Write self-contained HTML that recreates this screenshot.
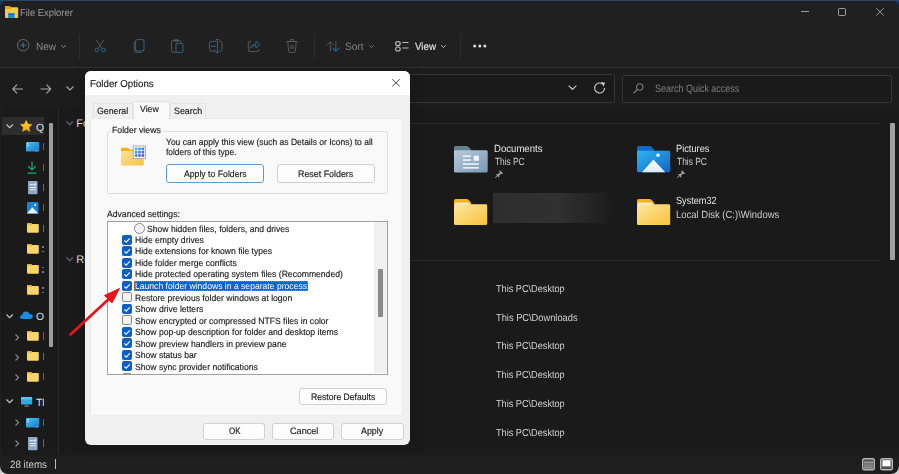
<!DOCTYPE html>
<html><head><meta charset="utf-8">
<style>
*{box-sizing:border-box}
html,body{margin:0;padding:0}
body{width:899px;height:474px;overflow:hidden;position:relative;background:linear-gradient(180deg,#2b4563 0,#2b4563 1px,#173a6c 1px,#173a6c 50%,#cfcfcf 50%);font-family:"Liberation Sans",sans-serif}
.a{position:absolute}
.t{position:absolute;white-space:pre;line-height:1}
svg{position:absolute;overflow:visible}
#win{position:absolute;left:0;top:1px;width:898.5px;height:473px;background:#1e1e1e;border-radius:7px 7px 8px 8px;overflow:hidden}
.tb{color:#8a8a8a;font-size:9.75px;top:41.75px}
.ct{color:#e4e4e4;font-size:9.35px}
.dt{font-size:8.5px;color:#1b1b1b}
.btn{position:absolute;background:#fdfdfd;border:1px solid #d0d0d0;border-radius:3px}
.cb{position:absolute;left:122px;width:10px;height:10px;border-radius:2px;background:#0b5fc4}
.cbo{position:absolute;left:122px;width:10px;height:10px;border-radius:2px;background:#f3f3f3;border:1px solid #8a8a8a}
.li{position:absolute;left:135.6px;font-size:8.5px;color:#1b1b1b;white-space:pre;line-height:1}
</style></head><body>
<div id="win"></div>
<!-- top chrome -->
<div class="a" style="left:0;top:1px;width:899px;height:66px;background:#202020;border-radius:7px 7px 0 0"></div>
<div class="a" style="left:0;top:67px;width:899px;height:1px;background:#2f2f2f"></div>
<div class="a" style="left:0;top:68px;width:899px;height:41px;background:#1c1c1c"></div>
<div class="a" style="left:1.5px;top:109px;width:897px;height:345.6px;background:#1a1a1a"></div>
<!-- app icon -->
<svg style="left:5px;top:6px" width="13.2" height="12" viewBox="0 0 13.2 12"><path d="M0 1Q0 0 1 0H4.6L5.9 1.3H12.2Q13.2 1.3 13.2 2.3V11Q13.2 12 12.2 12H1Q0 12 0 11Z" fill="#f6c84a"/><path d="M0 1Q0 0 1 0H4.6L5.9 1.3V2.9H0Z" fill="#e4a514"/><rect x="3.1" y="6.9" width="6.6" height="5.1" rx="0.5" fill="#1d8ae0"/><rect x="4" y="8" width="4.8" height="0.8" fill="#0f5fae"/></svg>
<div class="t" style="left:19.95px;top:9.00px;font-size:10.1px;color:#9c9c9c;transform:scaleX(0.9327);transform-origin:0 0;text-rendering:geometricPrecision;">File Explorer</div>
<!-- caption buttons -->
<div class="a" style="left:801px;top:11.4px;width:8px;height:1px;background:#9a9a9a"></div>
<div class="a" style="left:838px;top:8.2px;width:8px;height:8px;border:1px solid #9a9a9a;border-radius:1.2px"></div>
<svg style="left:875.8px;top:8.3px" width="8" height="7.7" viewBox="0 0 8 7.7"><path d="M0.2 0.2L7.8 7.5M7.8 0.2L0.2 7.5" stroke="#9a9a9a" stroke-width="0.95"/></svg>
<!-- toolbar -->
<svg style="left:16.9px;top:39.4px" width="12.4" height="12.4" viewBox="0 0 12.4 12.4">
  <circle cx="6.2" cy="6.2" r="5.7" fill="none" stroke="#6a6a6a" stroke-width="1"/>
  <path d="M6.2 3.2V9.2M3.2 6.2H9.2" stroke="#3a7898" stroke-width="1"/>
</svg>
<div class="t" style="left:35.90px;top:42.00px;font-size:10.6px;color:#8a8a8a;transform:scaleX(0.9483);transform-origin:0 0;text-rendering:geometricPrecision;">New</div>
<svg style="left:61px;top:44.7px" width="5" height="3" viewBox="0 0 5 3"><path d="M0.3 0.3L2.5 2.5L4.7 0.3" fill="none" stroke="#8a8a8a" stroke-width="1"/></svg>
<div class="a" style="left:79px;top:33.5px;width:1px;height:25px;background:#2e2e2e"></div>
<!-- cut -->
<svg style="left:94px;top:39px" width="12" height="14" viewBox="0 0 12 14">
  <path d="M2.3 1L8 9.5M9.7 1L4 9.5" stroke="#555" stroke-width="1"/>
  <circle cx="3" cy="11" r="1.9" fill="none" stroke="#2b6180" stroke-width="1"/>
  <circle cx="9.5" cy="11" r="1.9" fill="none" stroke="#2b6180" stroke-width="1"/>
</svg>
<!-- copy -->
<svg style="left:133px;top:39px" width="12" height="14" viewBox="0 0 12 14">
  <path d="M1.2 3V11.5Q1.2 13.3 3 13.3H8.5" fill="none" stroke="#555" stroke-width="1"/>
  <rect x="2.5" y="0.5" width="8.5" height="11.5" rx="2" fill="none" stroke="#2b6180" stroke-width="1.1"/>
</svg>
<!-- paste -->
<svg style="left:171px;top:39px" width="13" height="14" viewBox="0 0 13 14">
  <path d="M5 13.3H2Q0.5 13.3 0.5 11.8V3Q0.5 1.5 2 1.5H8.5Q10 1.5 10 3V4" fill="none" stroke="#555" stroke-width="1"/>
  <rect x="3.3" y="0.6" width="4" height="1.8" rx="0.8" fill="none" stroke="#555" stroke-width="1"/>
  <rect x="5" y="4.3" width="7" height="9.2" rx="1.8" fill="none" stroke="#2b6180" stroke-width="1.1"/>
</svg>
<!-- rename -->
<svg style="left:209px;top:39px" width="14" height="14" viewBox="0 0 14 14">
  <path d="M7 2.3H2.2Q0.5 2.3 0.5 4V10.3Q0.5 12 2.2 12H7M10 2.3H11.3Q13 2.3 13 4V10.3Q13 12 11.3 12H10" fill="none" stroke="#5a5a5a" stroke-width="1"/>
  <path d="M8.4 0.5V13.5M6.8 0.5H10M6.8 13.5H10" stroke="#2b6180" stroke-width="1.1"/>
  <path d="M2.2 7.2H6.8" stroke="#2b6180" stroke-width="1.3"/>
</svg>
<!-- share -->
<svg style="left:248px;top:39px" width="13" height="14" viewBox="0 0 13 14">
  <path d="M3 2.3H2Q0.3 2.3 0.3 4V10.8Q0.3 12.6 2 12.6H9Q10.8 12.6 10.8 10.8V10" fill="none" stroke="#5a5a5a" stroke-width="1"/>
  <path d="M2.3 9.5Q3 5 8 5.2V2L12 5.5L8 9V6.5Q4.5 6.3 2.3 9.5Z" fill="none" stroke="#2b6180" stroke-width="1"/>
</svg>
<!-- delete -->
<svg style="left:286px;top:39px" width="12" height="14" viewBox="0 0 12 14">
  <path d="M0.5 2.5H11.5M4.3 2.5V1.2Q4.3 0.6 5 0.6H7Q7.7 0.6 7.7 1.2V2.5M1.8 2.5L2.6 12Q2.8 13.4 4 13.4H8Q9.2 13.4 9.4 12L10.2 2.5" fill="none" stroke="#5a5a5a" stroke-width="1"/>
  <path d="M5 5.8V10M7 5.8V10" stroke="#5a5a5a" stroke-width="1"/>
</svg>
<div class="a" style="left:313.5px;top:33.5px;width:1px;height:25px;background:#2e2e2e"></div>
<!-- sort -->
<svg style="left:326px;top:40.5px" width="14" height="11" viewBox="0 0 14 11">
  <path d="M4.3 10.5V0.8M0.8 4.3L4.3 0.8L7.8 4.3" fill="none" stroke="#5a5a5a" stroke-width="1"/>
  <path d="M9.8 0.5V10.2M6.3 6.7L9.8 10.2L13.3 6.7" fill="none" stroke="#2b6180" stroke-width="1.1"/>
</svg>
<div class="t" style="left:345.09px;top:42.00px;font-size:10.6px;color:#808080;transform:scaleX(0.9540);transform-origin:0 0;text-rendering:geometricPrecision;">Sort</div>
<svg style="left:368.5px;top:44.7px" width="5" height="3" viewBox="0 0 5 3"><path d="M0.3 0.3L2.5 2.5L4.7 0.3" fill="none" stroke="#777" stroke-width="1"/></svg>
<!-- view -->
<svg style="left:395px;top:41px" width="14" height="11" viewBox="0 0 14 11">
  <rect x="0.6" y="0.6" width="4.6" height="4" rx="2" fill="none" stroke="#bdbdbd" stroke-width="1.1"/>
  <rect x="0.6" y="6" width="4.6" height="4" rx="2" fill="none" stroke="#bdbdbd" stroke-width="1.1"/>
  <path d="M7.3 1.5H13.5M7.3 7H13.5" stroke="#bdbdbd" stroke-width="1.1"/>
</svg>
<div class="t" style="left:414.60px;top:42.00px;font-size:10.6px;color:#dcdcdc;transform:scaleX(0.9258);transform-origin:0 0;text-rendering:geometricPrecision;-webkit-text-stroke:0.2px #dcdcdc;">View</div>
<svg style="left:440.7px;top:45px" width="5" height="3" viewBox="0 0 5 3"><path d="M0.3 0.3L2.5 2.5L4.7 0.3" fill="none" stroke="#bbb" stroke-width="1"/></svg>
<div class="a" style="left:459.5px;top:33.5px;width:1px;height:25px;background:#2e2e2e"></div>
<svg style="left:473px;top:44px" width="14" height="4" viewBox="0 0 14 4"><circle cx="1.7" cy="2" r="1.5" fill="#dedede"/><circle cx="6.8" cy="2" r="1.5" fill="#dedede"/><circle cx="11.9" cy="2" r="1.5" fill="#dedede"/></svg>
<!-- address row -->
<svg style="left:11.5px;top:83.5px" width="11.5" height="10" viewBox="0 0 11.5 10"><path d="M11 5H0.8M5 0.7L0.8 5L5 9.3" fill="none" stroke="#a8a8a8" stroke-width="1.1"/></svg>
<svg style="left:40px;top:83.5px" width="11.5" height="10" viewBox="0 0 11.5 10"><path d="M0.5 5H10.7M6.5 0.7L10.7 5L6.5 9.3" fill="none" stroke="#a8a8a8" stroke-width="1.1"/></svg>
<svg style="left:66px;top:85.5px" width="8" height="5" viewBox="0 0 8 5"><path d="M0.5 0.5L4 4L7.5 0.5" fill="none" stroke="#a8a8a8" stroke-width="1.1"/></svg>
<div class="a" style="left:88px;top:74px;width:527px;height:28.5px;border:1px solid #353535;background:#1a1a1a;border-radius:2px"></div>
<svg style="left:568px;top:84.9px" width="9" height="5" viewBox="0 0 9 5"><path d="M0.6 0.6L4.5 4.3L8.4 0.6" fill="none" stroke="#bcbcbc" stroke-width="1.2"/></svg>
<svg style="left:594px;top:82px" width="12" height="12" viewBox="0 0 12 12"><path d="M10.6 6A5 5 0 1 1 8.3 1.8" fill="none" stroke="#c8c8c8" stroke-width="1.2"/><path d="M6.8 0.2L11 0.6L9.6 4.6Z" fill="#d0d0d0"/></svg>
<div class="a" style="left:622px;top:74.5px;width:270px;height:28px;border:1px solid #353535;background:#1a1a1a;border-radius:2px"></div>
<svg style="left:633px;top:82.5px" width="11" height="11" viewBox="0 0 11 11"><circle cx="6.8" cy="4" r="3.3" fill="none" stroke="#8a8a8a" stroke-width="1"/><path d="M4.4 6.4L0.6 10.2" stroke="#8a8a8a" stroke-width="1.1"/></svg>
<div class="t" style="left:654.55px;top:84.00px;font-size:10.6px;color:#7d7d7d;transform:scaleX(0.8471);transform-origin:0 0;text-rendering:geometricPrecision;">Search Quick access</div>

<!-- NAV PANE -->
<div class="a" style="left:58px;top:109px;width:1px;height:346px;background:#2a2a2a"></div>
<div class="a" style="left:2px;top:117.4px;width:41.7px;height:17.6px;background:#2d2d2d"></div>
<svg style="left:6.3px;top:123.8px" width="8" height="5" viewBox="0 0 8 5"><path d="M0.5 0.5L3.7 3.7L6.9 0.5" fill="none" stroke="#c8c8c8" stroke-width="1.1"/></svg>
<svg style="left:20.2px;top:120.3px" width="12.4" height="12" viewBox="0 0 12.4 12"><defs><linearGradient id="sg" x1="0" y1="0" x2="0" y2="1"><stop offset="0" stop-color="#ffd83a"/><stop offset="1" stop-color="#f3a80c"/></linearGradient></defs><path d="M6.2 0.3L8 4L12.1 4.5L9.1 7.4L9.9 11.6L6.2 9.6L2.5 11.6L3.3 7.4L0.3 4.5L4.4 4Z" fill="url(#sg)" stroke="#f0b010" stroke-width="0.4" stroke-linejoin="round"/></svg>
<div class="a" style="left:0;top:0;width:43.8px;height:455px;overflow:hidden">
  <div class="t" style="left:35.90px;top:124.00px;font-size:10.4px;color:#e0e0e0;text-rendering:geometricPrecision;">Quick access</div>
  <div class="t" style="left:35.90px;top:313.00px;font-size:10.4px;color:#e0e0e0;text-rendering:geometricPrecision;">OneDrive</div>
  <div class="t" style="left:35.90px;top:399.00px;font-size:10.4px;color:#e0e0e0;text-rendering:geometricPrecision;">This PC</div>
</div>
<div class="a" style="left:42.5px;top:143.0px;width:1.5px;height:7.2px;background:#3f6e9c"></div>
<div class="a" style="left:42.5px;top:163.7px;width:1.5px;height:7.2px;background:#3f6e9c"></div>
<div class="a" style="left:42.5px;top:183.8px;width:1.5px;height:7.2px;background:#3f6e9c"></div>
<div class="a" style="left:42.5px;top:203.9px;width:1.5px;height:7.2px;background:#3f6e9c"></div>
<div class="a" style="left:42.5px;top:224.7px;width:1.5px;height:7.2px;background:#3f6e9c"></div>
<div class="a" style="left:42.5px;top:332.4px;width:1.5px;height:7.2px;background:#3f6e9c"></div>
<div class="a" style="left:42.5px;top:352.6px;width:1.5px;height:7.2px;background:#3f6e9c"></div>
<div class="a" style="left:42.5px;top:372.6px;width:1.5px;height:7.2px;background:#3f6e9c"></div>
<div class="a" style="left:42.5px;top:418.9px;width:1.5px;height:7.2px;background:#3f6e9c"></div>
<div class="a" style="left:42.5px;top:439.4px;width:1.5px;height:7.2px;background:#3f6e9c"></div>
<div class="a" style="left:42.3px;top:246.0px;width:1.6px;height:1.6px;background:#4f7fae"></div>
<div class="a" style="left:42.3px;top:250.6px;width:1.6px;height:1.6px;background:#4f7fae"></div>
<div class="a" style="left:42.3px;top:266.5px;width:1.6px;height:1.6px;background:#4f7fae"></div>
<div class="a" style="left:42.3px;top:271.1px;width:1.6px;height:1.6px;background:#4f7fae"></div>
<div class="a" style="left:42.3px;top:287.0px;width:1.6px;height:1.6px;background:#4f7fae"></div>
<div class="a" style="left:42.3px;top:291.6px;width:1.6px;height:1.6px;background:#4f7fae"></div>
<!-- nav icons -->
<svg style="left:25.6px;top:141.6px" width="13.3" height="9.8" viewBox="0 0 13.3 9.8"><defs><linearGradient id="dk1" x1="0" y1="0" x2="1" y2="1"><stop offset="0" stop-color="#45c6f2"/><stop offset="1" stop-color="#1478cc"/></linearGradient></defs><rect x="0" y="0" width="13.3" height="9.4" rx="1" fill="url(#dk1)"/><rect x="1.2" y="1.2" width="1.3" height="1.1" fill="#e8f6fd"/><rect x="1.2" y="3.2" width="1.3" height="1.1" fill="#e8f6fd"/><rect x="9.3" y="8.5" width="2.5" height="0.9" fill="#9ab"/></svg>
<svg style="left:27.4px;top:160.6px" width="10" height="13" viewBox="0 0 10 13"><path d="M5 0.5V9M1.2 5.3L5 9L8.8 5.3M0.5 12.2H9.5" fill="none" stroke="#1fa672" stroke-width="1.2"/></svg>
<svg style="left:28px;top:180.7px" width="9.5" height="13.3" viewBox="0 0 9.5 13.3"><rect width="9.5" height="13.3" rx="1" fill="#8da9c6"/><rect x="1.8" y="3" width="3.5" height="1" fill="#e8eef5"/><rect x="6" y="2.5" width="2" height="2" fill="#e8eef5"/><rect x="1.8" y="6" width="6" height="0.9" fill="#e8eef5"/><rect x="1.8" y="8.2" width="6" height="0.9" fill="#e8eef5"/></svg>
<svg style="left:27px;top:201.8px" width="11.4" height="11.4" viewBox="0 0 11.4 11.4"><rect width="11.4" height="11.4" rx="1" fill="#1683d8"/><path d="M0 11.4L5.2 5.2L11.4 11.4Z" fill="#e8f2fb"/><circle cx="8.2" cy="3" r="1" fill="#fff"/></svg>
<svg style="left:26.8px;top:223px" width="11.8" height="9.7" viewBox="0 0 11.8 9.7"><path d="M0 1Q0 0 1 0H4L5 1H10.8Q11.8 1 11.8 2V8.7Q11.8 9.7 10.8 9.7H1Q0 9.7 0 8.7Z" fill="#f8d469"/><path d="M0 1Q0 0 1 0H4L5 1V1.8H0Z" fill="#e9b12c"/></svg>
<svg style="left:26.8px;top:243.7px" width="11.8" height="9.7" viewBox="0 0 11.8 9.7"><path d="M0 1Q0 0 1 0H4L5 1H10.8Q11.8 1 11.8 2V8.7Q11.8 9.7 10.8 9.7H1Q0 9.7 0 8.7Z" fill="#f8d469"/><path d="M0 1Q0 0 1 0H4L5 1V1.8H0Z" fill="#e9b12c"/></svg>
<svg style="left:26.8px;top:264.2px" width="11.8" height="9.7" viewBox="0 0 11.8 9.7"><path d="M0 1Q0 0 1 0H4L5 1H10.8Q11.8 1 11.8 2V8.7Q11.8 9.7 10.8 9.7H1Q0 9.7 0 8.7Z" fill="#f8d469"/><path d="M0 1Q0 0 1 0H4L5 1V1.8H0Z" fill="#e9b12c"/></svg>
<svg style="left:26.8px;top:284.8px" width="11.8" height="9.7" viewBox="0 0 11.8 9.7"><path d="M0 1Q0 0 1 0H4L5 1H10.8Q11.8 1 11.8 2V8.7Q11.8 9.7 10.8 9.7H1Q0 9.7 0 8.7Z" fill="#f8d469"/><path d="M0 1Q0 0 1 0H4L5 1V1.8H0Z" fill="#e9b12c"/></svg>
<svg style="left:6.3px;top:313.5px" width="8" height="5" viewBox="0 0 8 5"><path d="M0.5 0.5L3.7 3.7L6.9 0.5" fill="none" stroke="#c8c8c8" stroke-width="1.1"/></svg>
<svg style="left:20px;top:311.3px" width="12.8" height="8" viewBox="0 0 12.8 8"><path d="M2.3 8Q0 8 0 5.9Q0 4 2.2 3.8Q3 0.5 6.3 0.5Q9 0.5 9.8 3Q12.8 3 12.8 5.6Q12.8 8 10.3 8Z" fill="#1c8ce3"/></svg>
<svg style="left:14.8px;top:333.8px" width="4.5" height="7" viewBox="0 0 4.5 7"><path d="M0.5 0.5L3.6 3.5L0.5 6.5" fill="none" stroke="#8a8a8a" stroke-width="1.1"/></svg>
<svg style="left:14.8px;top:353.8px" width="4.5" height="7" viewBox="0 0 4.5 7"><path d="M0.5 0.5L3.6 3.5L0.5 6.5" fill="none" stroke="#8a8a8a" stroke-width="1.1"/></svg>
<svg style="left:14.8px;top:373.8px" width="4.5" height="7" viewBox="0 0 4.5 7"><path d="M0.5 0.5L3.6 3.5L0.5 6.5" fill="none" stroke="#8a8a8a" stroke-width="1.1"/></svg>
<svg style="left:26.8px;top:331.2px" width="11.8" height="9.7" viewBox="0 0 11.8 9.7"><path d="M0 1Q0 0 1 0H4L5 1H10.8Q11.8 1 11.8 2V8.7Q11.8 9.7 10.8 9.7H1Q0 9.7 0 8.7Z" fill="#f8d469"/><path d="M0 1Q0 0 1 0H4L5 1V1.8H0Z" fill="#e9b12c"/></svg>
<svg style="left:26.8px;top:351.4px" width="11.8" height="9.7" viewBox="0 0 11.8 9.7"><path d="M0 1Q0 0 1 0H4L5 1H10.8Q11.8 1 11.8 2V8.7Q11.8 9.7 10.8 9.7H1Q0 9.7 0 8.7Z" fill="#f8d469"/><path d="M0 1Q0 0 1 0H4L5 1V1.8H0Z" fill="#e9b12c"/></svg>
<svg style="left:26.8px;top:371.6px" width="11.8" height="9.7" viewBox="0 0 11.8 9.7"><path d="M0 1Q0 0 1 0H4L5 1H10.8Q11.8 1 11.8 2V8.7Q11.8 9.7 10.8 9.7H1Q0 9.7 0 8.7Z" fill="#f8d469"/><path d="M0 1Q0 0 1 0H4L5 1V1.8H0Z" fill="#e9b12c"/></svg>
<svg style="left:6.3px;top:399.4px" width="8" height="5" viewBox="0 0 8 5"><path d="M0.5 0.5L3.7 3.7L6.9 0.5" fill="none" stroke="#c8c8c8" stroke-width="1.1"/></svg>
<svg style="left:20.5px;top:397.2px" width="11.2" height="9.6" viewBox="0 0 11.2 9.6"><rect width="11.2" height="7.6" rx="0.8" fill="#2fa7e0"/><rect y="0" width="11.2" height="2.6" rx="0.8" fill="#5ac4ef"/><rect x="4.8" y="7.6" width="1.6" height="1.4" fill="#777"/><rect x="3" y="8.8" width="5.2" height="0.8" fill="#888"/></svg>
<svg style="left:14.8px;top:418.8px" width="4.5" height="7" viewBox="0 0 4.5 7"><path d="M0.5 0.5L3.6 3.5L0.5 6.5" fill="none" stroke="#8a8a8a" stroke-width="1.1"/></svg>
<svg style="left:14.8px;top:439.8px" width="4.5" height="7" viewBox="0 0 4.5 7"><path d="M0.5 0.5L3.6 3.5L0.5 6.5" fill="none" stroke="#8a8a8a" stroke-width="1.1"/></svg>
<svg style="left:25.6px;top:418px" width="13.3" height="9.8" viewBox="0 0 13.3 9.8"><defs><linearGradient id="dk2" x1="0" y1="0" x2="1" y2="1"><stop offset="0" stop-color="#45c6f2"/><stop offset="1" stop-color="#1478cc"/></linearGradient></defs><rect x="0" y="0" width="13.3" height="9.4" rx="1" fill="url(#dk2)"/><rect x="1.2" y="1.2" width="1.3" height="1.1" fill="#e8f6fd"/><rect x="1.2" y="3.2" width="1.3" height="1.1" fill="#e8f6fd"/><rect x="9.3" y="8.5" width="2.5" height="0.9" fill="#9ab"/></svg>
<svg style="left:28px;top:437px" width="9.5" height="13.3" viewBox="0 0 9.5 13.3"><rect width="9.5" height="13.3" rx="1" fill="#8da9c6"/><rect x="1.8" y="3" width="3.5" height="1" fill="#e8eef5"/><rect x="6" y="2.5" width="2" height="2" fill="#e8eef5"/><rect x="1.8" y="6" width="6" height="0.9" fill="#e8eef5"/><rect x="1.8" y="8.2" width="6" height="0.9" fill="#e8eef5"/></svg>
<div class="a" style="left:48.5px;top:123px;width:4.2px;height:223.7px;background:#9c9c9c;border-radius:1px"></div>
<!-- status bar -->
<div class="t" style="left:10.31px;top:460.00px;font-size:10.6px;color:#cfcfcf;transform:scaleX(0.9229);transform-origin:0 0;text-rendering:geometricPrecision;">28 items</div>
<div class="a" style="left:54.5px;top:459px;width:1px;height:10px;background:#bdbdbd"></div>
<svg style="left:862.4px;top:458.2px" width="13" height="12.5" viewBox="0 0 13 12.5"><rect x="0.7" y="0.7" width="11.6" height="11.1" rx="1.6" fill="#3a3a3a" stroke="#b8b8b8" stroke-width="1.4"/><path d="M2 3.3H11M2 5.8H11M2 8.3H11M2 10.4H11" stroke="#6e6e6e" stroke-width="1.4"/><path d="M2 4.6H11M2 7.1H11M2 9.4H11" stroke="#c0c0c0" stroke-width="0.8"/></svg>
<svg style="left:880.2px;top:458.2px" width="13" height="12.5" viewBox="0 0 13 12.5"><rect x="0.7" y="0.7" width="11.6" height="11.1" rx="1.6" fill="#444" stroke="#b8b8b8" stroke-width="1.4"/><rect x="2.4" y="2.2" width="8.2" height="6.3" fill="#ffffff"/><rect x="2.4" y="8.6" width="8.2" height="1.8" fill="#555"/></svg>
<!-- CONTENT -->
<svg style="left:66px;top:121px" width="8" height="5" viewBox="0 0 8 5"><path d="M0.5 0.5L3.7 3.7L6.9 0.5" fill="none" stroke="#6a6a6a" stroke-width="1.1"/></svg>
<div class="t" style="left:76.30px;top:119.00px;font-size:11.0px;color:#dedede;text-rendering:geometricPrecision;">Folders</div>
<div class="a" style="left:120px;top:122.5px;width:760px;height:1px;background:#2a2a2a"></div>
<svg style="left:66px;top:257.3px" width="8" height="5" viewBox="0 0 8 5"><path d="M0.5 0.5L3.7 3.7L6.9 0.5" fill="none" stroke="#6a6a6a" stroke-width="1.1"/></svg>
<div class="t" style="left:76.30px;top:255.00px;font-size:11.0px;color:#dedede;text-rendering:geometricPrecision;">Recent</div>
<div class="a" style="left:120px;top:259.5px;width:760px;height:1px;background:#2a2a2a"></div>
<div class="a" style="left:890.4px;top:123.2px;width:4.2px;height:137px;background:#a0a0a0;border-radius:1px"></div>
<!-- documents -->
<svg style="left:454.3px;top:145.9px" width="34" height="27" viewBox="0 0 34 27"><defs><linearGradient id="dg" x1="0" y1="0" x2="1" y2="1"><stop offset="0" stop-color="#b9cbdc"/><stop offset="1" stop-color="#7897b5"/></linearGradient></defs><path d="M0 1.6Q0 0 1.6 0H12.5Q13.6 0 14.4 0.8L17.2 3.8V9H0Z" fill="#62808f"/><path d="M0 5.6Q0 4.2 1.4 4.2H32.2Q33.7 4.2 33.7 5.7V25Q33.7 26.6 32.1 26.6H1.6Q0 26.6 0 25Z" fill="url(#dg)"/><g fill="#f4f7fa"><rect x="8.9" y="9.4" width="8" height="1.5"/><rect x="8.9" y="13.3" width="8" height="1.5"/><rect x="19.7" y="9.7" width="5.2" height="5.1"/><rect x="8.9" y="17.3" width="16" height="1.5"/><rect x="8.9" y="21.1" width="16" height="1.5"/></g></svg>
<div class="t" style="left:494.13px;top:145.00px;font-size:10.4px;color:#e6e6e6;transform:scaleX(0.9226);transform-origin:0 0;text-rendering:geometricPrecision;">Documents</div>
<div class="t" style="left:494.73px;top:158.00px;font-size:10.4px;color:#cdcdcd;transform:scaleX(0.8022);transform-origin:0 0;text-rendering:geometricPrecision;">This PC</div>
<svg style="left:495px;top:170px" width="8.5" height="8" viewBox="0 0 8.5 8"><path d="M5 0.3L8.2 3.5L7.3 4L5.8 3.8L4.2 5.4L4.4 7L3.8 7.5L0.9 4.6L1.4 4L3 4.2L4.6 2.6L4.4 1.1Z" fill="#9aa0a6"/><path d="M2.2 5.8L0.2 7.8" stroke="#9aa0a6" stroke-width="1"/></svg>
<!-- pictures -->
<svg style="left:636.8px;top:146.3px" width="34" height="27" viewBox="0 0 34 27"><defs><linearGradient id="pg" x1="0" y1="0" x2="1" y2="1"><stop offset="0" stop-color="#33b3f0"/><stop offset="1" stop-color="#0c68c6"/></linearGradient><linearGradient id="mg" x1="0" y1="0" x2="0" y2="1"><stop offset="0" stop-color="#ffffff"/><stop offset="1" stop-color="#dce9f8"/></linearGradient></defs><path d="M0 1.6Q0 0 1.6 0H12.5Q13.6 0 14.4 0.8L17.2 3.8V9H0Z" fill="#0a6bcb"/><path d="M0 6.1Q0 4.7 1.4 4.7H31.8Q33.2 4.7 33.2 6.1V24.6Q33.2 26.2 31.6 26.2H1.6Q0 26.2 0 24.6Z" fill="url(#pg)"/><path d="M5 26.2L16.4 13.5L28.2 26.2Z" fill="url(#mg)"/><circle cx="21" cy="9.3" r="1.8" fill="#f0f6fc"/></svg>
<div class="t" style="left:676.06px;top:145.00px;font-size:10.4px;color:#e6e6e6;transform:scaleX(0.8901);transform-origin:0 0;text-rendering:geometricPrecision;">Pictures</div>
<div class="t" style="left:676.63px;top:158.00px;font-size:10.4px;color:#cdcdcd;transform:scaleX(0.8104);transform-origin:0 0;text-rendering:geometricPrecision;">This PC</div>
<svg style="left:677px;top:170px" width="8.5" height="8" viewBox="0 0 8.5 8"><path d="M5 0.3L8.2 3.5L7.3 4L5.8 3.8L4.2 5.4L4.4 7L3.8 7.5L0.9 4.6L1.4 4L3 4.2L4.6 2.6L4.4 1.1Z" fill="#9aa0a6"/><path d="M2.2 5.8L0.2 7.8" stroke="#9aa0a6" stroke-width="1"/></svg>
<!-- folder blurred -->
<svg style="left:454.2px;top:198.8px" width="34" height="27" viewBox="0 0 34 27"><defs><linearGradient id="yg1" x1="0" y1="0" x2="1" y2="1"><stop offset="0" stop-color="#fee6a2"/><stop offset="1" stop-color="#f8c238"/></linearGradient></defs><path d="M0 1.6Q0 0 1.6 0H12.5Q13.6 0 14.4 0.8L17.2 3.8V9H0Z" fill="#f6b51a"/><rect x="1" y="3.7" width="14" height="2.4" fill="#f3efe6"/><path d="M0 6.3Q0 5.3 1 5.3H31.8Q33.2 5.3 33.2 6.7V24.5Q33.2 26.1 31.6 26.1H1.6Q0 26.1 0 24.5Z" fill="url(#yg1)"/></svg>
<div class="a" style="left:493.4px;top:193.2px;width:120px;height:29.6px;background:linear-gradient(90deg,#2e2e2e 0%,#303030 55%,#252525 80%,#1a1a1a 100%)"></div>
<!-- system32 -->
<svg style="left:636.8px;top:198.8px" width="34" height="27" viewBox="0 0 34 27"><defs><linearGradient id="yg2" x1="0" y1="0" x2="1" y2="1"><stop offset="0" stop-color="#fee6a2"/><stop offset="1" stop-color="#f8c238"/></linearGradient></defs><path d="M0 1.6Q0 0 1.6 0H12.5Q13.6 0 14.4 0.8L17.2 3.8V9H0Z" fill="#f6b51a"/><rect x="1" y="3.7" width="14" height="2.4" fill="#f3efe6"/><path d="M0 6.3Q0 5.3 1 5.3H31.8Q33.2 5.3 33.2 6.7V24.5Q33.2 26.1 31.6 26.1H1.6Q0 26.1 0 24.5Z" fill="url(#yg2)"/></svg>
<div class="t" style="left:676.24px;top:197.00px;font-size:10.4px;color:#e6e6e6;transform:scaleX(0.8775);transform-origin:0 0;text-rendering:geometricPrecision;">System32</div>
<div class="t" style="left:675.94px;top:211.00px;font-size:10.4px;color:#cdcdcd;transform:scaleX(0.9124);transform-origin:0 0;text-rendering:geometricPrecision;">Local Disk (C:)\Windows</div>
<!-- recent -->
<div class="t" style="left:495.92px;top:285.00px;font-size:10.2px;color:#d2d2d2;transform:scaleX(0.8987);transform-origin:0 0;text-rendering:geometricPrecision;">This PC\Desktop</div>
<div class="t" style="left:495.91px;top:314.00px;font-size:10.2px;color:#d2d2d2;transform:scaleX(0.9119);transform-origin:0 0;text-rendering:geometricPrecision;">This PC\Downloads</div>
<div class="t" style="left:495.92px;top:342.00px;font-size:10.2px;color:#d2d2d2;transform:scaleX(0.8987);transform-origin:0 0;text-rendering:geometricPrecision;">This PC\Desktop</div>
<div class="t" style="left:495.92px;top:371.00px;font-size:10.2px;color:#d2d2d2;transform:scaleX(0.8987);transform-origin:0 0;text-rendering:geometricPrecision;">This PC\Desktop</div>
<div class="t" style="left:495.92px;top:400.00px;font-size:10.2px;color:#d2d2d2;transform:scaleX(0.8987);transform-origin:0 0;text-rendering:geometricPrecision;">This PC\Desktop</div>
<div class="t" style="left:495.92px;top:429.00px;font-size:10.2px;color:#d2d2d2;transform:scaleX(0.8987);transform-origin:0 0;text-rendering:geometricPrecision;">This PC\Desktop</div>


<!-- DIALOG -->
<div class="a" style="left:80px;top:70px;width:336px;height:380px;background:rgba(0,0,0,0.08);filter:blur(4px);border-radius:10px"></div>
<div class="a" style="left:84.8px;top:71.4px;width:325px;height:374px;background:#f0f0f0;border-radius:6px;overflow:hidden">
  <div class="a" style="left:0;top:0;width:325px;height:23.4px;background:#ffffff"></div>
</div>
<div class="t" style="left:90.12px;top:80.00px;font-size:10.0px;color:#1b1b1b;transform:scaleX(0.9705);transform-origin:0 0;text-rendering:geometricPrecision;-webkit-text-stroke:0.15px #1b1b1b;">Folder Options</div>
<svg style="left:392.3px;top:79.3px" width="8" height="7.6" viewBox="0 0 8 7.6"><path d="M0.2 0.2L7.8 7.4M7.8 0.2L0.2 7.4" stroke="#333" stroke-width="0.9"/></svg>
<!-- tabs -->
<div class="a" style="left:92.5px;top:103px;width:40.5px;height:15px;background:#f0f0f0;border:1px solid #e3e3e3;border-bottom:none"></div>
<div class="a" style="left:170.2px;top:103px;width:36px;height:15px;background:#f0f0f0;border:1px solid #e3e3e3;border-bottom:none"></div>
<div class="a" style="left:90.4px;top:117.5px;width:312.4px;height:298.3px;background:#f9f9f9;border:1px solid #ebebeb"></div>
<div class="a" style="left:132.6px;top:101px;width:37.6px;height:17.5px;background:#f9f9f9;border:1px solid #e3e3e3;border-bottom:none"></div>
<div class="t" style="left:97.46px;top:107.00px;font-size:9.1px;color:#1b1b1b;transform:scaleX(0.9615);transform-origin:0 0;text-rendering:geometricPrecision;-webkit-text-stroke:0.15px #1b1b1b;">General</div>
<div class="t" style="left:139.91px;top:105.00px;font-size:9.1px;color:#1b1b1b;transform:scaleX(0.9603);transform-origin:0 0;text-rendering:geometricPrecision;-webkit-text-stroke:0.15px #1b1b1b;">View</div>
<div class="t" style="left:174.26px;top:107.00px;font-size:9.1px;color:#1b1b1b;transform:scaleX(0.9764);transform-origin:0 0;text-rendering:geometricPrecision;-webkit-text-stroke:0.15px #1b1b1b;">Search</div>
<!-- group -->
<div class="a" style="left:107.2px;top:130.5px;width:280.5px;height:63.8px;border:1px solid #dedede;border-radius:2px"></div>
<div class="a" style="left:110.5px;top:127px;width:52px;height:8px;background:#f9f9f9"></div>
<div class="t" style="left:112.10px;top:126.00px;font-size:8.9px;color:#1b1b1b;transform:scaleX(0.9785);transform-origin:0 0;text-rendering:geometricPrecision;-webkit-text-stroke:0.15px #1b1b1b;">Folder views</div>
<svg style="left:120.8px;top:145.8px" width="24.5" height="19.5" viewBox="0 0 24.5 19.5">
  <defs><linearGradient id="fg" x1="0" y1="0" x2="1" y2="1"><stop offset="0" stop-color="#fde39a"/><stop offset="1" stop-color="#f8c443"/></linearGradient>
  <linearGradient id="gg" gradientUnits="userSpaceOnUse" x1="13.5" y1="1.5" x2="23.5" y2="11"><stop offset="0" stop-color="#26d4e4"/><stop offset="0.5" stop-color="#3a7fd6"/><stop offset="1" stop-color="#6b35c4"/></linearGradient></defs>
  <path d="M0 2.8Q0 1.8 1 1.8H7L8.6 3.4H21.5Q22.5 3.4 22.5 4.4V18.2Q22.5 19.2 21.5 19.2H1Q0 19.2 0 18.2Z" fill="#f1b21b"/>
  <path d="M0 5.8Q0 5 0.8 5H21.7Q22.5 5 22.5 5.8V18.2Q22.5 19.2 21.5 19.2H1Q0 19.2 0 18.2Z" fill="url(#fg)"/>
  <rect x="12.2" y="0" width="12.2" height="12.4" fill="#fff" stroke="#9a9a9a" stroke-width="0.8"/>
  <g fill="url(#gg)"><rect x="13.8" y="1.6" width="2.6" height="2.6"/><rect x="17.2" y="1.6" width="2.6" height="2.6"/><rect x="20.6" y="1.6" width="2.6" height="2.6"/>
  <rect x="13.8" y="4.9" width="2.6" height="2.6"/><rect x="17.2" y="4.9" width="2.6" height="2.6"/><rect x="20.6" y="4.9" width="2.6" height="2.6"/>
  <rect x="13.8" y="8.2" width="2.6" height="2.6"/><rect x="17.2" y="8.2" width="2.6" height="2.6"/><rect x="20.6" y="8.2" width="2.6" height="2.6"/></g>
</svg>
<div class="t" style="left:165.93px;top:138.00px;font-size:9.0px;color:#1b1b1b;transform:scaleX(0.9446);transform-origin:0 0;text-rendering:geometricPrecision;-webkit-text-stroke:0.15px #1b1b1b;">You can apply this view (such as Details or Icons) to all</div>
<div class="t" style="left:165.92px;top:148.00px;font-size:9.0px;color:#1b1b1b;transform:scaleX(0.9329);transform-origin:0 0;text-rendering:geometricPrecision;-webkit-text-stroke:0.15px #1b1b1b;">folders of this type.</div>
<div class="btn" style="left:166.1px;top:164.3px;width:97.7px;height:18.3px;border:1.3px solid #5b9be0"></div>
<div class="t" style="left:183.60px;top:170.00px;font-size:9.3px;color:#1b1b1b;transform:scaleX(0.9332);transform-origin:0 0;text-rendering:geometricPrecision;-webkit-text-stroke:0.15px #1b1b1b;">Apply to Folders</div>
<div class="btn" style="left:277.4px;top:164.3px;width:97.3px;height:18.3px"></div>
<div class="t" style="left:297.79px;top:170.00px;font-size:9.3px;color:#1b1b1b;transform:scaleX(0.9538);transform-origin:0 0;text-rendering:geometricPrecision;-webkit-text-stroke:0.15px #1b1b1b;">Reset Folders</div>
<div class="t" style="left:107.10px;top:210.00px;font-size:9.0px;color:#1b1b1b;transform:scaleX(0.9583);transform-origin:0 0;text-rendering:geometricPrecision;-webkit-text-stroke:0.15px #1b1b1b;">Advanced settings:</div>
<!-- listbox -->
<div class="a" style="left:107px;top:221.3px;width:280.5px;height:154px;border:1px solid #a0a0a0;background:#fff;overflow:hidden">
  <div class="a" style="left:266px;top:0;width:13px;height:151px;background:#f0f0f0"></div>
  <div class="a" style="left:270.4px;top:47px;width:4.6px;height:47.7px;background:#8a8a8a;border-radius:1px"></div>
</div>
<div class="a" style="left:107px;top:221.3px;width:267px;height:152.8px;overflow:hidden">
  <div class="a" style="left:-107px;top:-221.3px;width:899px;height:474px">
<div class="a" style="left:134.1px;top:223.2px;width:10.5px;height:10.5px;border-radius:50%;border:1px solid #8a8a8a;background:#f3f3f3"></div>
<div class="t" style="left:147.27px;top:225.00px;font-size:9.0px;color:#1b1b1b;transform:scaleX(0.9550);transform-origin:0 0;text-rendering:geometricPrecision;-webkit-text-stroke:0.15px #1b1b1b;">Show hidden files, folders, and drives</div>
<div class="cb" style="top:234.50px"><svg style="left:0;top:0" width="10" height="10" viewBox="0 0 10 10"><path d="M2.3 5.3L4.2 7.1L7.8 3.4" fill="none" stroke="#f4f8fc" stroke-width="1.15"/></svg></div>
<div class="t" style="left:135.00px;top:236.00px;font-size:9.0px;color:#1b1b1b;transform:scaleX(0.9550);transform-origin:0 0;text-rendering:geometricPrecision;-webkit-text-stroke:0.15px #1b1b1b;">Hide empty drives</div>
<div class="cb" style="top:246.04px"><svg style="left:0;top:0" width="10" height="10" viewBox="0 0 10 10"><path d="M2.3 5.3L4.2 7.1L7.8 3.4" fill="none" stroke="#f4f8fc" stroke-width="1.15"/></svg></div>
<div class="t" style="left:135.00px;top:247.00px;font-size:9.0px;color:#1b1b1b;transform:scaleX(0.9550);transform-origin:0 0;text-rendering:geometricPrecision;-webkit-text-stroke:0.15px #1b1b1b;">Hide extensions for known file types</div>
<div class="cb" style="top:257.58px"><svg style="left:0;top:0" width="10" height="10" viewBox="0 0 10 10"><path d="M2.3 5.3L4.2 7.1L7.8 3.4" fill="none" stroke="#f4f8fc" stroke-width="1.15"/></svg></div>
<div class="t" style="left:135.00px;top:259.00px;font-size:9.0px;color:#1b1b1b;transform:scaleX(0.9550);transform-origin:0 0;text-rendering:geometricPrecision;-webkit-text-stroke:0.15px #1b1b1b;">Hide folder merge conflicts</div>
<div class="cb" style="top:269.12px"><svg style="left:0;top:0" width="10" height="10" viewBox="0 0 10 10"><path d="M2.3 5.3L4.2 7.1L7.8 3.4" fill="none" stroke="#f4f8fc" stroke-width="1.15"/></svg></div>
<div class="t" style="left:135.00px;top:270.00px;font-size:9.0px;color:#1b1b1b;transform:scaleX(0.9550);transform-origin:0 0;text-rendering:geometricPrecision;-webkit-text-stroke:0.15px #1b1b1b;">Hide protected operating system files (Recommended)</div>
<div class="cb" style="top:280.66px"><svg style="left:0;top:0" width="10" height="10" viewBox="0 0 10 10"><path d="M2.3 5.3L4.2 7.1L7.8 3.4" fill="none" stroke="#f4f8fc" stroke-width="1.15"/></svg></div>
<div class="a" style="left:134px;top:280.9px;width:174px;height:10.3px;background:#0a63d0;outline:1px dotted #c08040;outline-offset:-1px"></div>
<div class="t" style="left:135.00px;top:282.00px;font-size:9.0px;color:#fff;transform:scaleX(0.9550);transform-origin:0 0;text-rendering:geometricPrecision;">Launch folder windows in a separate process</div>
<div class="cbo" style="top:292.20px"></div>
<div class="t" style="left:135.00px;top:294.00px;font-size:9.0px;color:#1b1b1b;transform:scaleX(0.9550);transform-origin:0 0;text-rendering:geometricPrecision;-webkit-text-stroke:0.15px #1b1b1b;">Restore previous folder windows at logon</div>
<div class="cb" style="top:303.74px"><svg style="left:0;top:0" width="10" height="10" viewBox="0 0 10 10"><path d="M2.3 5.3L4.2 7.1L7.8 3.4" fill="none" stroke="#f4f8fc" stroke-width="1.15"/></svg></div>
<div class="t" style="left:135.00px;top:305.00px;font-size:9.0px;color:#1b1b1b;transform:scaleX(0.9550);transform-origin:0 0;text-rendering:geometricPrecision;-webkit-text-stroke:0.15px #1b1b1b;">Show drive letters</div>
<div class="cbo" style="top:315.28px"></div>
<div class="t" style="left:135.00px;top:317.00px;font-size:9.0px;color:#1b1b1b;transform:scaleX(0.9550);transform-origin:0 0;text-rendering:geometricPrecision;-webkit-text-stroke:0.15px #1b1b1b;">Show encrypted or compressed NTFS files in color</div>
<div class="cb" style="top:326.82px"><svg style="left:0;top:0" width="10" height="10" viewBox="0 0 10 10"><path d="M2.3 5.3L4.2 7.1L7.8 3.4" fill="none" stroke="#f4f8fc" stroke-width="1.15"/></svg></div>
<div class="t" style="left:135.00px;top:328.00px;font-size:9.0px;color:#1b1b1b;transform:scaleX(0.9550);transform-origin:0 0;text-rendering:geometricPrecision;-webkit-text-stroke:0.15px #1b1b1b;">Show pop-up description for folder and desktop items</div>
<div class="cb" style="top:338.36px"><svg style="left:0;top:0" width="10" height="10" viewBox="0 0 10 10"><path d="M2.3 5.3L4.2 7.1L7.8 3.4" fill="none" stroke="#f4f8fc" stroke-width="1.15"/></svg></div>
<div class="t" style="left:135.00px;top:340.00px;font-size:9.0px;color:#1b1b1b;transform:scaleX(0.9550);transform-origin:0 0;text-rendering:geometricPrecision;-webkit-text-stroke:0.15px #1b1b1b;">Show preview handlers in preview pane</div>
<div class="cb" style="top:349.90px"><svg style="left:0;top:0" width="10" height="10" viewBox="0 0 10 10"><path d="M2.3 5.3L4.2 7.1L7.8 3.4" fill="none" stroke="#f4f8fc" stroke-width="1.15"/></svg></div>
<div class="t" style="left:135.00px;top:351.00px;font-size:9.0px;color:#1b1b1b;transform:scaleX(0.9550);transform-origin:0 0;text-rendering:geometricPrecision;-webkit-text-stroke:0.15px #1b1b1b;">Show status bar</div>
<div class="cb" style="top:361.44px"><svg style="left:0;top:0" width="10" height="10" viewBox="0 0 10 10"><path d="M2.3 5.3L4.2 7.1L7.8 3.4" fill="none" stroke="#f4f8fc" stroke-width="1.15"/></svg></div>
<div class="t" style="left:135.00px;top:363.00px;font-size:9.0px;color:#1b1b1b;transform:scaleX(0.9550);transform-origin:0 0;text-rendering:geometricPrecision;-webkit-text-stroke:0.15px #1b1b1b;">Show sync provider notifications</div>
<div class="a" style="left:123px;top:372.9px;width:8.2px;height:1.1px;background:#8c8c8c"></div>
  </div>
</div>
<div class="btn" style="left:299.3px;top:388.4px;width:87.9px;height:16.6px"></div>
<div class="t" style="left:311.01px;top:393.00px;font-size:9.3px;color:#1b1b1b;transform:scaleX(0.9271);transform-origin:0 0;text-rendering:geometricPrecision;-webkit-text-stroke:0.15px #1b1b1b;">Restore Defaults</div>
<div class="btn" style="left:203.4px;top:423px;width:62.1px;height:16.5px"></div>
<div class="t" style="left:228.80px;top:427.00px;font-size:9.3px;color:#1b1b1b;transform:scaleX(0.8571);transform-origin:0 0;text-rendering:geometricPrecision;-webkit-text-stroke:0.15px #1b1b1b;">OK</div>
<div class="btn" style="left:272.4px;top:423px;width:62.1px;height:16.5px"></div>
<div class="t" style="left:289.55px;top:427.00px;font-size:9.3px;color:#1b1b1b;transform:scaleX(0.9785);transform-origin:0 0;text-rendering:geometricPrecision;-webkit-text-stroke:0.15px #1b1b1b;">Cancel</div>
<div class="btn" style="left:341.4px;top:423px;width:62.5px;height:16.5px"></div>
<div class="t" style="left:361.20px;top:427.00px;font-size:9.3px;color:#1b1b1b;transform:scaleX(0.9548);transform-origin:0 0;text-rendering:geometricPrecision;-webkit-text-stroke:0.15px #1b1b1b;">Apply</div>
<!-- red arrow -->
<svg style="left:0;top:0" width="899" height="474" viewBox="0 0 899 474">
  <path d="M70.5 334.5L111 297" stroke="#e8131b" stroke-width="2.7" stroke-linecap="round"/>
  <path d="M119.5 288.5L104.5 295.5L112 303Z" fill="#e8131b" stroke="#e8131b" stroke-width="1" stroke-linejoin="round"/>
</svg>

</body></html>
